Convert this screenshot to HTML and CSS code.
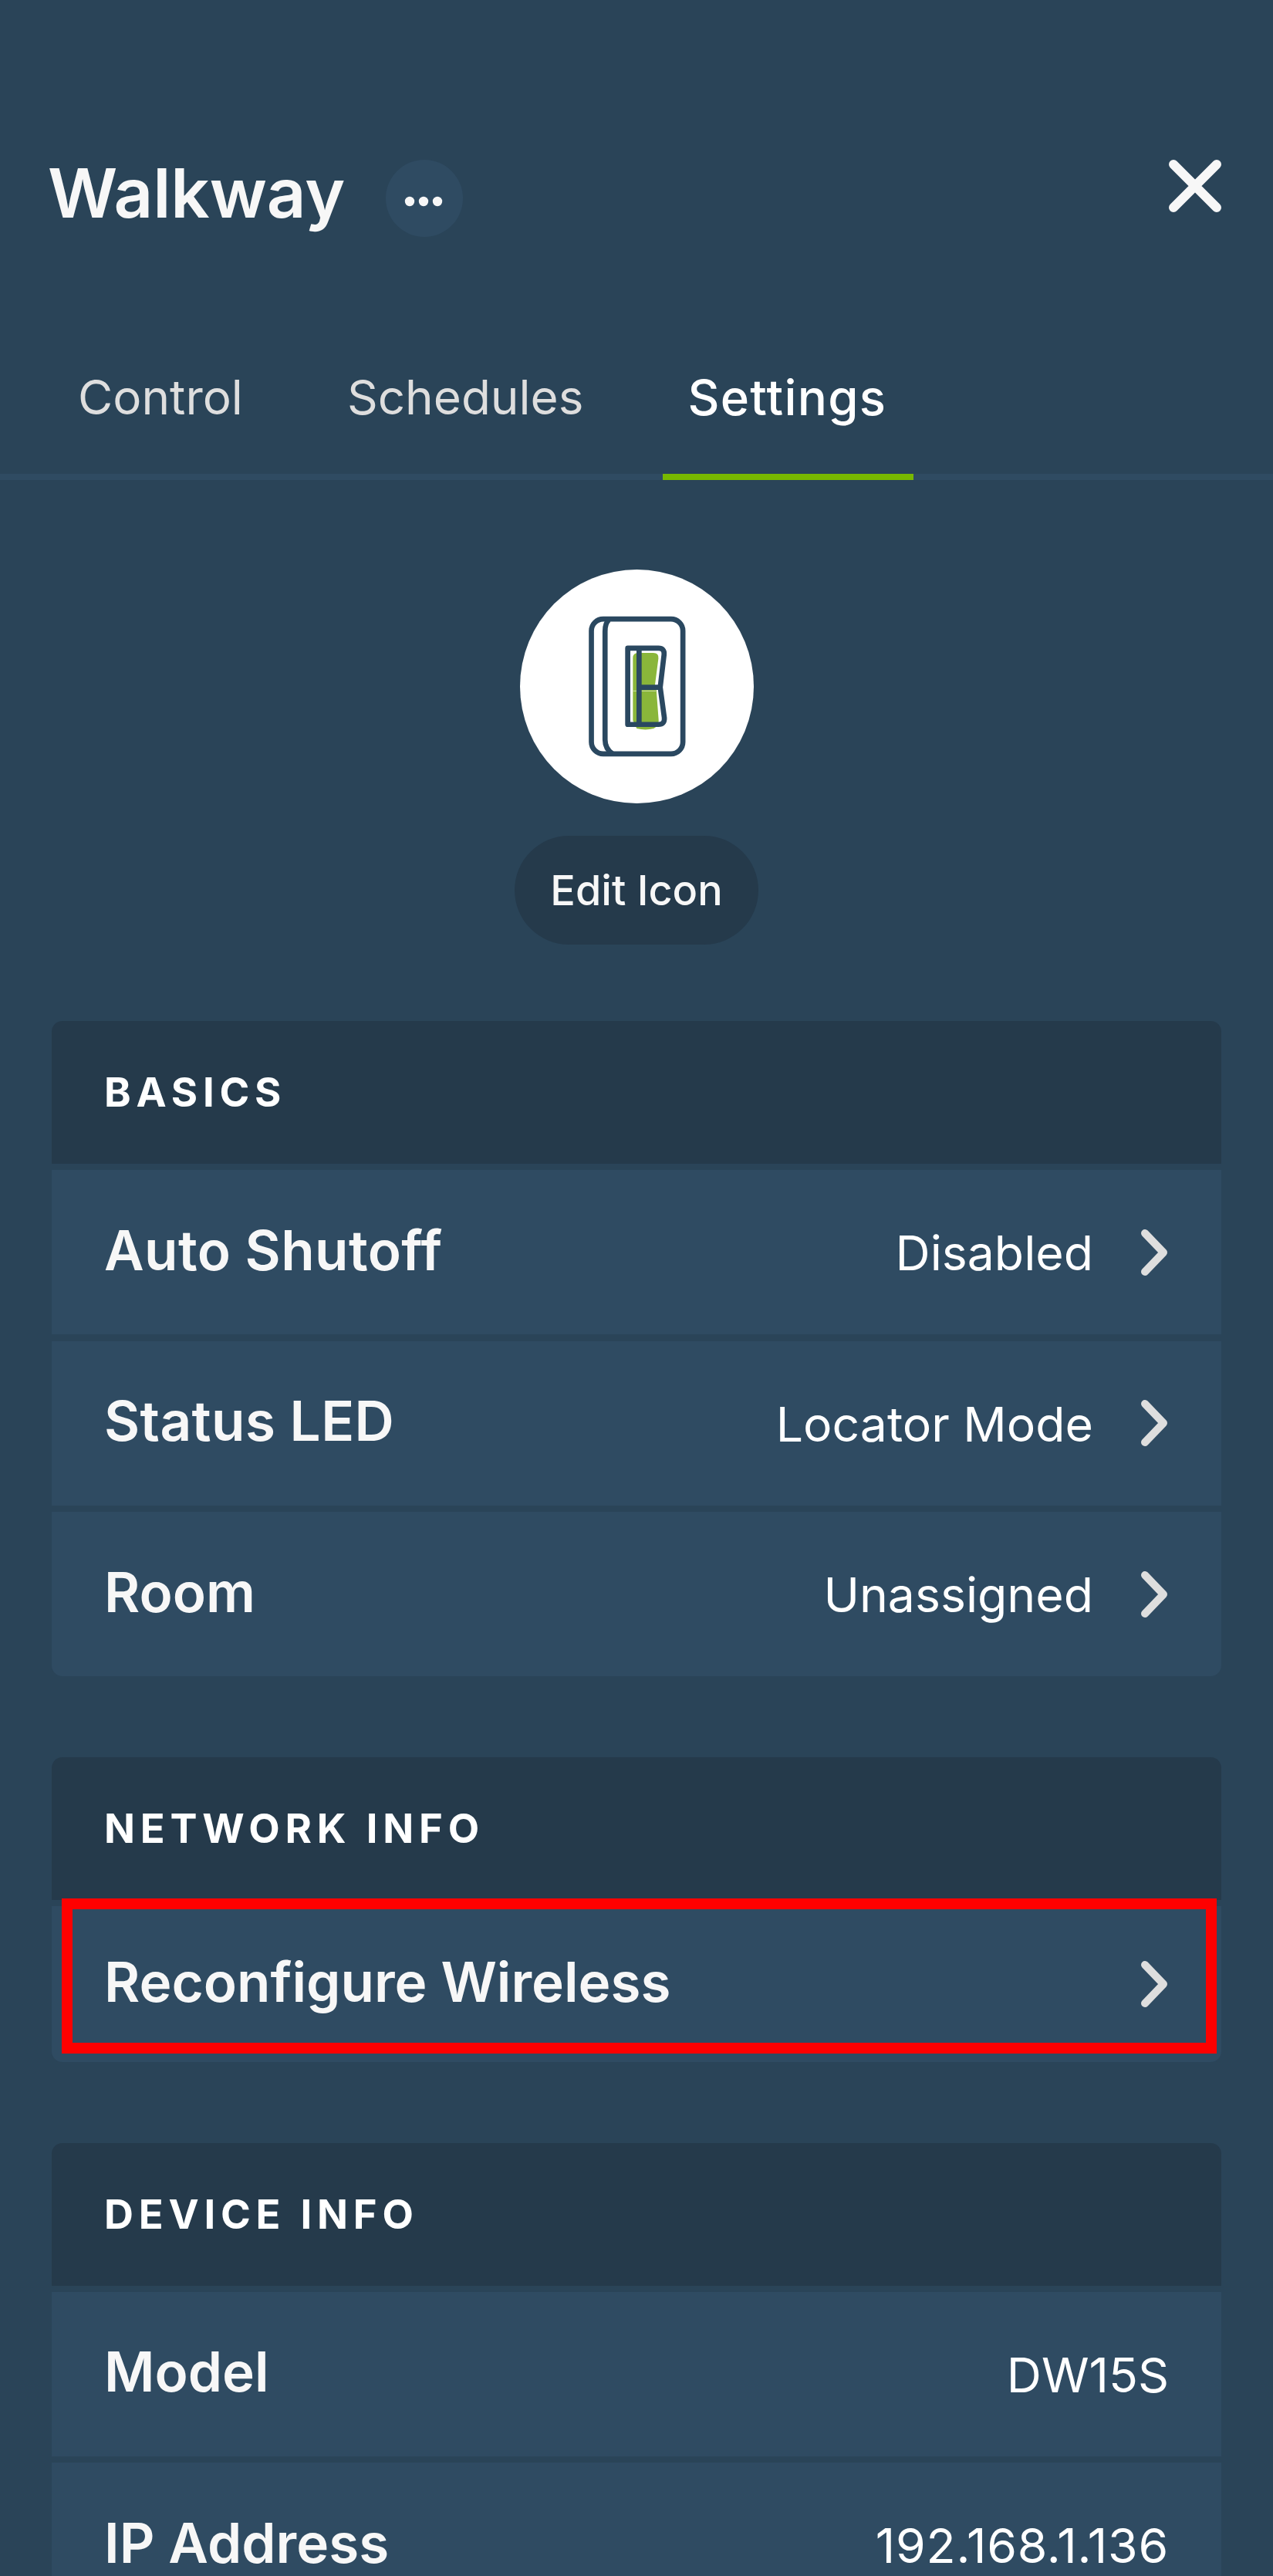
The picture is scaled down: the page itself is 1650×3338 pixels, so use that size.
FILE: index.html
```html
<!doctype html>
<html lang="en">
  <head>
    <meta charset="UTF-8" />
    <meta name="viewport" content="width=device-width, initial-scale=1.0" />
    <title>Walkway Settings</title>
    <link rel="stylesheet" href="styles.css">
  </head>
  <body>
    <div class="page">
      <header class="title-bar">
        <h1 class="title">Walkway</h1>
        <button class="more-btn" aria-label="More">
          <svg width="100" height="100" viewBox="0 0 100 100">
            <circle cx="31" cy="54" r="6.2" />
            <circle cx="49" cy="54" r="6.2" />
            <circle cx="67" cy="54" r="6.2" />
          </svg>
        </button>
        <svg class="close-icon" width="68" height="68" viewBox="0 0 68 68">
          <path d="M6 6 L62 62 M62 6 L6 62" />
        </svg>
      </header>

      <nav class="tabs">
        <a class="tab">Control</a>
        <a class="tab">Schedules</a>
        <a class="tab active">Settings</a>
      </nav>

      <div class="device-icon">
        <div class="icon-circle">
          <svg width="303" height="303" viewBox="103 55 907 907">
            <path class="green" d="M541 398 Q541 378 561 378 H620 Q642 378 640 400 L627 500 V522 H632 L641 640 Q642 660 622 672 Q590 680 556 672 L541 640 Z" />
            <path class="white-line" d="M541 526 H630" />
            <rect class="line" x="380" y="247" width="355" height="523" rx="46" />
            <path class="line" d="M448 250 Q433 262 433 295 V715 Q433 750 462 770" />
            <path class="line" d="M521 360 H640 Q664 360 662 385 L647 512 L663 630 Q665 656 640 656 H521 Z" />
            <path class="line" d="M565 360 V656 M565 512 H647" />
          </svg>
        </div>
        <button class="edit-btn">Edit Icon</button>
      </div>

      <section class="card">
        <h2 class="card-head">BASICS</h2>
        <a class="row">
          <span class="row-label wide">Auto Shutoff</span>
          <span class="row-value">Disabled</span>
          <svg class="chevron" width="34" height="60" viewBox="0 0 34 60"><path d="M5 5 L29 30 L5 55" /></svg>
        </a>
        <a class="row">
          <span class="row-label wide">Status LED</span>
          <span class="row-value">Locator Mode</span>
          <svg class="chevron" width="34" height="60" viewBox="0 0 34 60"><path d="M5 5 L29 30 L5 55" /></svg>
        </a>
        <a class="row">
          <span class="row-label">Room</span>
          <span class="row-value">Unassigned</span>
          <svg class="chevron" width="34" height="60" viewBox="0 0 34 60"><path d="M5 5 L29 30 L5 55" /></svg>
        </a>
      </section>

      <section class="card">
        <h2 class="card-head">NETWORK INFO</h2>
        <a class="row row-short">
          <span class="row-label">Reconfigure Wireless</span>
          <svg class="chevron" width="34" height="60" viewBox="0 0 34 60"><path d="M5 5 L29 30 L5 55" /></svg>
          <span class="highlight"></span>
        </a>
      </section>

      <section class="card">
        <h2 class="card-head">DEVICE INFO</h2>
        <div class="row">
          <span class="row-label">Model</span>
          <span class="row-value plain">DW15S</span>
        </div>
        <div class="row">
          <span class="row-label">IP Address</span>
          <span class="row-value plain ip">192.168.1.136</span>
        </div>
      </section>
    </div>
  </body>
</html>
```

FILE: styles.css
```css
html,
body {
  margin: 0;
  padding: 0;
  background: #2a4458;
}
.page {
  width: 1650px;
  height: 3338px;
  overflow: hidden;
  background: #2a4458;
  font-family: Inter, "Liberation Sans", sans-serif;
  color: #f7f7f7;
}
.title-bar {
  display: flex;
  align-items: center;
  height: 100px;
  padding: 207px 67px 0 62px;
}
.title {
  margin: 0 53px 14px 0;
  font-size: 88.5px;
  font-weight: 600;
  line-height: 100px;
}
.more-btn {
  width: 100px;
  height: 100px;
  padding: 0;
  border: 0;
  border-radius: 50%;
  background: #2f4b62;
}
.more-btn svg {
  display: block;
  fill: #f7f7f7;
}
.close-icon {
  margin-left: auto;
  align-self: flex-start;
}
.close-icon path {
  fill: none;
  stroke: #f7f7f7;
  stroke-width: 12;
  stroke-linecap: round;
}
.tabs {
  display: flex;
  gap: 71px;
  height: 167px;
  margin-top: 140px;
  padding-left: 69px;
  border-bottom: 8px solid #2f4b62;
}
.tab {
  height: 167px;
  padding: 0 32px;
  font-size: 62px;
  line-height: 136px;
  color: #dedede;
}
.tab.active {
  padding-right: 35px;
  border-bottom: 8px solid #78b800;
  color: #fff;
  font-size: 63.5px;
  font-weight: 500;
  letter-spacing: 1.3px;
}
.device-icon {
  display: flex;
  flex-direction: column;
  align-items: center;
  margin-top: 116px;
}
.icon-circle {
  width: 303px;
  height: 303px;
  border-radius: 50%;
  background: #fff;
}
.icon-circle svg {
  display: block;
}
.icon-circle .line {
  fill: none;
  stroke: #2a4860;
  stroke-width: 20;
  stroke-linejoin: round;
}
.icon-circle .green {
  fill: #8ab63a;
}
.icon-circle .white-line {
  stroke: #cfe0a8;
  stroke-width: 3;
}
.edit-btn {
  width: 316px;
  height: 141px;
  margin-top: 42px;
  padding: 0;
  border: 0;
  border-radius: 71px;
  background: #253a4b;
  color: #f7f7f7;
  font-family: inherit;
  font-size: 54px;
  font-weight: 500;
}
.card {
  display: flex;
  flex-direction: column;
  gap: 8.4px;
  margin: 104.5px 67px 0;
}
.device-icon + .card {
  margin-top: 99px;
}
.card-head {
  margin: 0;
  height: 185px;
  padding-left: 68px;
  border-radius: 14px 14px 0 0;
  background: #253a4b;
  color: #fff;
  font-size: 52.5px;
  font-weight: 700;
  letter-spacing: 6.8px;
  line-height: 185px;
}
.row {
  position: relative;
  display: flex;
  align-items: center;
  height: 213px;
  padding: 0 70px 0 68px;
  background: #2f4b62;
}
.row:last-child {
  border-radius: 0 0 14px 14px;
}
.row-short {
  height: 202px;
}
.row-label {
  margin-bottom: 6px;
  font-size: 71px;
  font-weight: 600;
}
.row-label.wide {
  letter-spacing: 0.4px;
}
.row-value {
  margin-top: 1px;
  margin-left: auto;
  margin-right: 62px;
  font-size: 62.5px;
  color: #fff;
}
.row-value.plain {
  margin-right: -2px;
}
.row-value.ip {
  letter-spacing: 0.8px;
}
.chevron {
  margin-left: auto;
}
.row-value + .chevron {
  margin-left: 0;
}
.chevron path {
  fill: none;
  stroke: #dedede;
  stroke-width: 10;
  stroke-linecap: round;
  stroke-linejoin: round;
}
.highlight {
  position: absolute;
  top: -10px;
  left: 13px;
  right: 6px;
  bottom: 11px;
  border: 14px solid #f00;
}
```
